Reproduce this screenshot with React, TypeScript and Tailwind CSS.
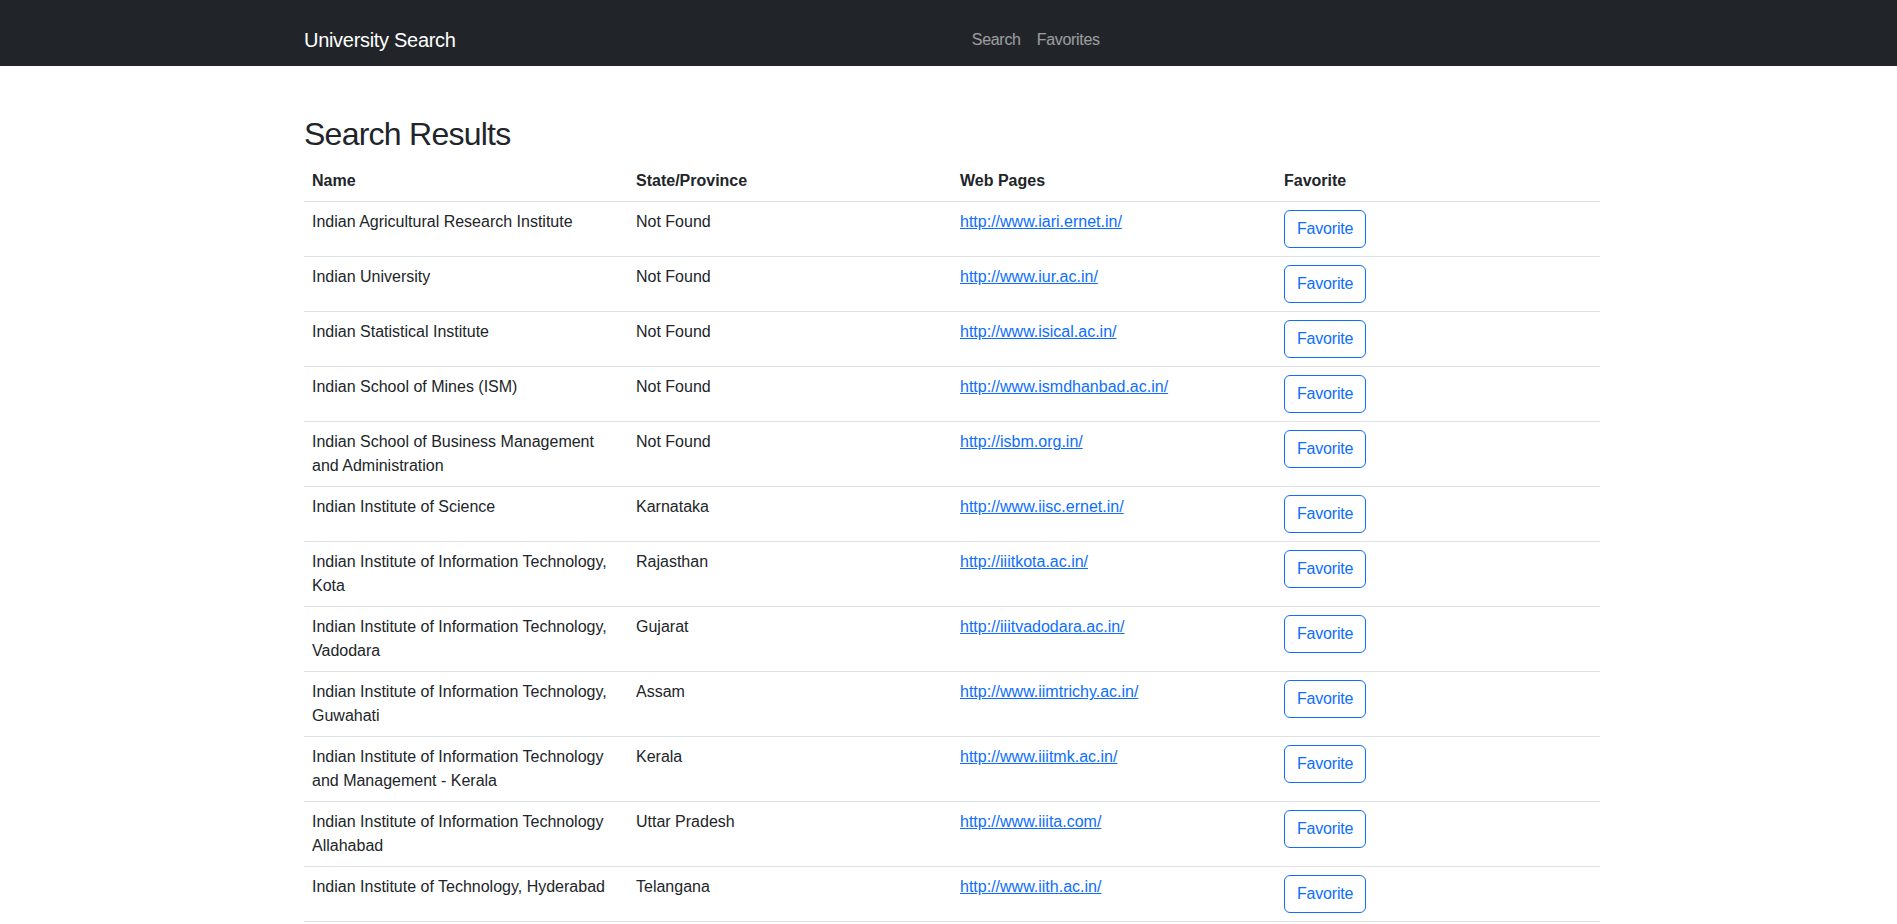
import React from 'react';

interface University {
    name: string;
    state: string;
    web: string;
}

const universities: University[] = [
    { name: 'Indian Agricultural Research Institute', state: 'Not Found', web: 'http://www.iari.ernet.in/' },
    { name: 'Indian University', state: 'Not Found', web: 'http://www.iur.ac.in/' },
    { name: 'Indian Statistical Institute', state: 'Not Found', web: 'http://www.isical.ac.in/' },
    { name: 'Indian School of Mines (ISM)', state: 'Not Found', web: 'http://www.ismdhanbad.ac.in/' },
    { name: 'Indian School of Business Management and Administration', state: 'Not Found', web: 'http://isbm.org.in/' },
    { name: 'Indian Institute of Science', state: 'Karnataka', web: 'http://www.iisc.ernet.in/' },
    { name: 'Indian Institute of Information Technology, Kota', state: 'Rajasthan', web: 'http://iiitkota.ac.in/' },
    { name: 'Indian Institute of Information Technology, Vadodara', state: 'Gujarat', web: 'http://iiitvadodara.ac.in/' },
    { name: 'Indian Institute of Information Technology, Guwahati', state: 'Assam', web: 'http://www.iimtrichy.ac.in/' },
    { name: 'Indian Institute of Information Technology and Management - Kerala', state: 'Kerala', web: 'http://www.iiitmk.ac.in/' },
    { name: 'Indian Institute of Information Technology Allahabad', state: 'Uttar Pradesh', web: 'http://www.iiita.com/' },
    { name: 'Indian Institute of Technology, Hyderabad', state: 'Telangana', web: 'http://www.iith.ac.in/' },
];

const Navbar: React.FC = () => (
    <nav className="bg-[#212529] h-[66px]">
        <div className="mx-auto w-[1303px] pl-[7px] h-full pt-[13px] flex items-center">
            <a href="#" className="text-white text-[20px] leading-[30px] tracking-[-0.3px] mr-4">University Search</a>
            <div className="flex-1 flex justify-center">
                <a href="#" className="px-2 text-base leading-6 tracking-[-0.3px] text-white/55">Search</a>
                <a href="#" className="px-2 text-base leading-6 tracking-[-0.3px] text-white/55">Favorites</a>
            </div>
        </div>
    </nav>
);

export default function App() {
    const cell = 'px-2 py-2 align-top border-b border-[#dee2e6]';

    return (
        <div className="font-['Liberation_Sans',Arial,sans-serif] text-[#212529] text-base leading-6 bg-white">
            <Navbar />
            <div className="mx-auto w-[1303px] pl-[7px]">
                <h2 className="mt-[49px] mb-2 text-[32px] leading-[1.2] font-medium tracking-[-0.75px]">Search Results</h2>
                <table className="w-full table-fixed border-collapse">
                    <thead>
                        <tr>
                            <th className={`${cell} text-left font-bold w-1/4`}>Name</th>
                            <th className={`${cell} text-left font-bold w-1/4`}>State/Province</th>
                            <th className={`${cell} text-left font-bold w-1/4`}>Web Pages</th>
                            <th className={`${cell} text-left font-bold w-1/4`}>Favorite</th>
                        </tr>
                    </thead>
                    <tbody>
                        {universities.map(u => (
                            <tr key={u.name}>
                                <td className={cell}>{u.name}</td>
                                <td className={cell}>{u.state}</td>
                                <td className={cell}>
                                    <a href={u.web} className="text-[#0d6efd] underline">{u.web}</a>
                                </td>
                                <td className={cell}>
                                    <button className="border border-[#0d6efd] text-[#0d6efd] rounded-[6px] px-3 py-[6px] text-base leading-6 tracking-[-0.2px] bg-transparent">
                                        Favorite
                                    </button>
                                </td>
                            </tr>
                        ))}
                    </tbody>
                </table>
            </div>
        </div>
    );
}
